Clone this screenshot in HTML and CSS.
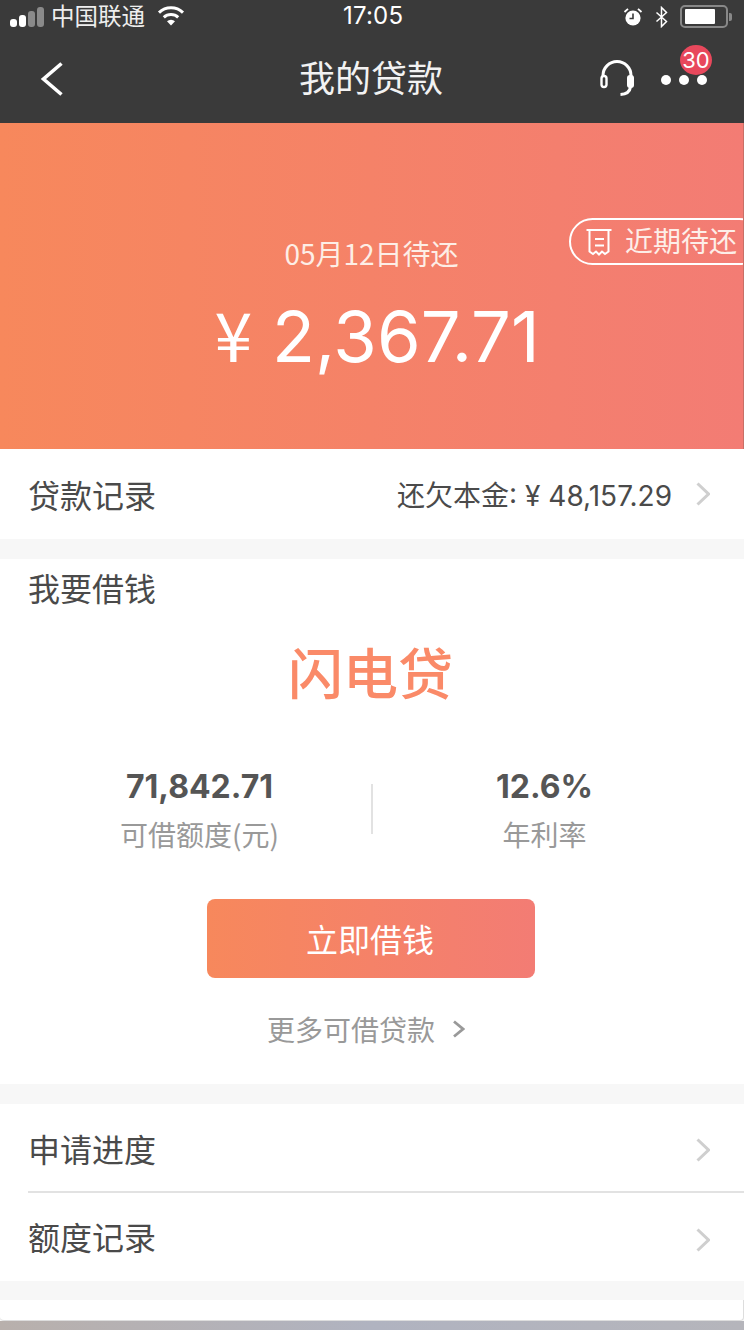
FILE: index.html
```html
<!DOCTYPE html>
<html lang="zh-CN">
<head>
<meta charset="utf-8">
<title>我的贷款</title>
<link rel="stylesheet" href="styles.css">
</head>
<body>
<div class="page">
  <header class="topbar">
    <div class="status">
      <div class="status-left">
        <span class="signal"><i class="on s1"></i><i class="on s2"></i><i class="s3"></i><i class="s4"></i></span>
        <span class="carrier">中国联通</span>
        <svg class="wifi" width="28" height="20" viewBox="0 0 28 20"><path d="M14 19.500l-4-4.200a5.800 5.800 0 0 1 8 0z" fill="#fff"/><path d="M6.800 11.300a10.400 10.400 0 0 1 14.400 0M2 6.600a17.200 17.200 0 0 1 24 0" fill="none" stroke="#fff" stroke-width="3"/></svg>
      </div>
      <span class="clock">17:05</span>
      <div class="status-right">
        <svg width="20" height="20" viewBox="0 0 20 20"><circle cx="10" cy="11" r="7.600" fill="#fff"/><path d="M10 6.500V11.500H6.500" fill="none" stroke="#3a3a3a" stroke-width="1.600"/><path d="M1.500 5L5 1.800M18.500 5L15 1.800" stroke="#fff" stroke-width="1.800"/></svg>
        <svg class="bt" width="14" height="22" viewBox="0 0 14 22"><path d="M1.500 6.500L11.500 15.500L6.500 20.500V1.500L11.500 6.500L1.500 15.500" fill="none" stroke="#fff" stroke-width="1.500"/></svg>
        <span class="battery"><span class="battery-level"></span></span><span class="battery-cap"></span>
      </div>
    </div>
    <nav class="nav">
      <svg class="back" width="24" height="36" viewBox="0 0 24 36"><path d="M21.500 3.500L3.500 19L21.500 34.500" fill="none" stroke="#fff" stroke-width="3.600"/></svg>
      <h1 class="title">我的贷款</h1>
      <div class="nav-right">
        <svg width="34" height="36" viewBox="0 0 34 36"><path d="M3 18V15.500a14 14 0 0 1 28 0V18" fill="none" stroke="#fff" stroke-width="3"/><rect x="1.500" y="16" width="5" height="11" rx="2.500" fill="#3a3a3a" stroke="#fff" stroke-width="2.400"/><rect x="27" y="15" width="7" height="13" rx="3" fill="#fff"/><path d="M30.500 27q-1 7-10 7.500" fill="none" stroke="#fff" stroke-width="3"/></svg>
        <div class="more">
          <i></i><i></i><i></i>
          <span class="badge">30</span>
        </div>
      </div>
    </nav>
  </header>

  <section class="hero">
    <div class="pill">
      <svg width="26" height="28" viewBox="0 0 26 28"><path d="M0.500 2H25.500M3.500 2V23.500L7 26L10 23.500L13 26.500L16 23.500L19 26L22.500 23.500V2" fill="none" stroke="#fff" stroke-width="2"/><path d="M9 11H18M9 17.500H18" stroke="#fff" stroke-width="2"/></svg>
      <span>近期待还</span>
    </div>
    <div class="due">05月12日待还</div>
    <div class="amount"><span class="yen">¥</span> 2,367.71</div>
  </section>

  <a class="row">
    <span class="row-label">贷款记录</span>
    <span class="row-value">还欠本金: ¥ 48,157.29</span>
    <svg class="chev" width="14" height="24" viewBox="0 0 14 24"><path d="M1.500 1.500L12.500 12L1.500 22.500" fill="none" stroke="#cfcfcf" stroke-width="3"/></svg>
  </a>

  <section class="borrow">
    <h2 class="row-label borrow-title">我要借钱</h2>
    <div class="product">闪电贷</div>
    <div class="stats">
      <div class="stat">
        <strong>71,842.71</strong>
        <span>可借额度(元)</span>
      </div>
      <div class="stat">
        <strong>12.6%</strong>
        <span>年利率</span>
      </div>
    </div>
    <div class="cta">立即借钱</div>
    <div class="more-link">更多可借贷款
      <svg width="14" height="20" viewBox="0 0 14 20"><path d="M3 2.500L12 10L3 17.500" fill="none" stroke="#999" stroke-width="2.800"/></svg>
    </div>
  </section>

  <section class="list">
    <a class="row row-a">
      <span class="row-label">申请进度</span>
      <svg class="chev" width="14" height="24" viewBox="0 0 14 24"><path d="M1.500 1.500L12.500 12L1.500 22.500" fill="none" stroke="#cfcfcf" stroke-width="3"/></svg>
    </a>
    <a class="row row-b">
      <span class="row-label">额度记录</span>
      <svg class="chev" width="14" height="24" viewBox="0 0 14 24"><path d="M1.500 1.500L12.500 12L1.500 22.500" fill="none" stroke="#cfcfcf" stroke-width="3"/></svg>
    </a>
  </section>

  <div class="tail"></div>
  <div class="edge"></div>
</div>
</body>
</html>
```

FILE: styles.css
```css
* { box-sizing: border-box; margin: 0; padding: 0; }
html, body { width: 744px; height: 1330px; overflow: hidden; background: #f7f7f7; }
body { font-family: "Noto Sans CJK SC", "Inter", sans-serif; color: #444; }
.page { display: flex; flex-direction: column; height: 1330px; }

.topbar { background: #3a3a3a; height: 123px; color: #fff; flex: none; }
.status { height: 33px; padding: 0 12px 0 10px; display: flex; align-items: center; position: relative; }
.status-left { display: flex; align-items: center; flex: 1; }
.signal { display: flex; align-items: flex-end; gap: 2px; height: 20px; margin-right: 7px; }
.signal i { width: 7px; background: #8a8a8a; border-radius: 3px; display: block; }
.signal .on { background: #fff; }
.s1 { height: 8px; } .s2 { height: 12px; } .s3 { height: 16px; } .s4 { height: 20px; }
.carrier { font-size: 23.5px; line-height: 26px; color: #eee; margin-top: -4px; }
.wifi { margin-left: 12px; margin-top: -2px; }
.clock { font-family: "Inter", sans-serif; font-size: 24px; position: absolute; left: 343px; top: -1px; line-height: 33px; letter-spacing: .2px; }
.status-right { display: flex; align-items: center; gap: 12px; }
.battery { width: 48px; height: 23px; border: 2px solid #888; border-radius: 5px; padding: 2px 3px; margin-left: -1px; display: block; }
.battery-level { display: block; width: 30px; height: 15px; background: #fff; border-radius: 1px; }
.battery-cap { width: 3px; height: 8px; background: #888; margin-left: -11px; border-radius: 0 2px 2px 0; }

.nav { height: 90px; display: flex; align-items: center; padding: 0 37px 0 40px; position: relative; }
.back { flex: none; }
.title { position: absolute; left: 0; right: 2px; top: 20px; text-align: center; font-size: 36px; font-weight: 400; line-height: 46px; color: #f2f2f2; }
.nav-right { margin-left: auto; display: flex; align-items: center; gap: 27px; }
.more { display: flex; gap: 8px; position: relative; margin-top: 4px; }
.more i { width: 10px; height: 10px; border-radius: 50%; background: #fff; display: block; }
.badge { position: absolute; left: 19px; top: -30px; width: 32px; height: 30px; border-radius: 50%; background: #e8485c; color: #fff; font: 400 22px/30px "Inter", sans-serif; text-align: center; }

.hero { height: 326px; flex: none; background: linear-gradient(90deg, #f7885c, #f37c74); color: #fff; position: relative; text-align: center; padding-top: 109px; overflow: hidden; border-right: 1px solid #c96f66; }
.due { font-size: 28px; line-height: 42px; color: #fdeee6; }
.amount { font-family: "Inter", sans-serif; font-weight: 400; font-size: 70.5px; line-height: 84px; margin-top: 17px; padding-left: 11px; }
.amount .yen { font-size: 68px; font-family: "Noto Sans CJK SC", sans-serif; font-weight: 400; }
.pill { position: absolute; left: 569px; right: -20px; top: 95px; height: 47px; border: 2px solid #fff; border-radius: 24px; display: flex; align-items: center; padding-left: 15px; gap: 13px; font-size: 28px; color: #fdeee8; }
.pill span { margin-top: -3px; }

.row { display: flex; align-items: center; background: #fff; height: 90px; flex: none; padding: 0 34px 0 28px; }
.row-label { font-size: 32px; font-weight: 400; line-height: 40px; color: #4a4a4a; }
.row-value { margin-left: auto; margin-right: 24px; font-size: 28px; color: #4a4a4a; font-family: "Inter", "Noto Sans CJK SC", sans-serif; }
.chev { margin-left: auto; flex: none; }
.row-value + .chev { margin-left: 0; }

.borrow { background: #fff; margin-top: 20px; height: 525px; flex: none; text-align: center; }
.borrow-title { text-align: left; padding: 8px 0 0 28px; line-height: 40px; height: 51px; }
.product { font-size: 55px; line-height: 72px; color: #fa8a68; margin-top: 24px; font-weight: 500; padding-right: 3px; }
.stats { display: grid; grid-template-columns: 1fr 1fr; margin-top: 61px; padding: 0 27px; }
.stat { display: flex; flex-direction: column; align-items: center; gap: 7px; }
.stat + .stat { position: relative; }
.stat + .stat::before { content: ""; position: absolute; left: -1px; top: 17px; height: 50px; width: 2px; background: #e2e2e2; }
.stat strong { font: 700 32px/40px "Inter", sans-serif; color: #555; }
.stat span { font-size: 28px; line-height: 40px; color: #999; }
.cta { width: 328px; height: 79px; margin: 45px 0 0 207px; border-radius: 8px; background: linear-gradient(90deg, #f7885c, #f37c74); color: #fff; font-size: 32px; line-height: 79px; padding-right: 2px; }
.more-link { display: flex; justify-content: center; align-items: center; gap: 16px; margin-top: 31px; font-size: 28px; line-height: 40px; color: #999; padding-right: 12px; }

.list { margin-top: 20px; background: #fff; flex: none; }
.row-a { height: 87px; }
.row-a .chev { margin-top: 4px; }
.row-b { height: 90px; padding-bottom: 3px; border-top: 2px solid #e2e2e2; margin-left: 28px; padding-left: 0; }
.row-b .chev { margin-top: 8px; }
.tail { flex: none; margin-top: 19px; height: 21px; background: #fff; border-radius: 0 0 4px 4px; border: solid #ddd; border-width: 0 1px 1px 0; }
.edge { flex: none; height: 9px; background: linear-gradient(90deg, #b8b0ac, #b0b3c0 50%, #b5b5bb); }
```
